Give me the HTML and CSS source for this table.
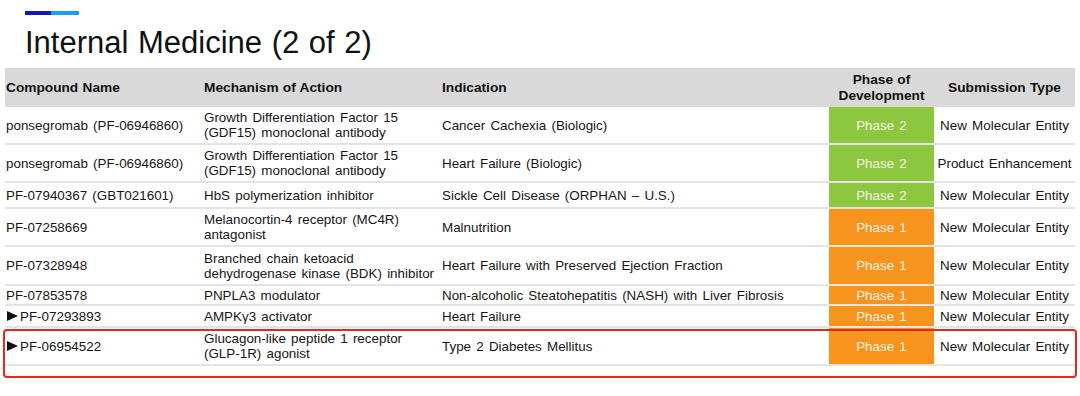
FILE: index.html
```html
<!DOCTYPE html>
<html>
<head>
<meta charset="utf-8">
<link rel="stylesheet" href="styles.css">
</head>
<body>
<div class="page">
  <div class="accent"><span class="a1"></span><span class="a2"></span></div>
  <h1 class="title">Internal Medicine (2 of 2)</h1>
  <div class="table">
    <div class="row head">
      <div class="cell c1">Compound Name</div>
      <div class="cell">Mechanism of Action</div>
      <div class="cell">Indication</div>
      <div class="cell center">Phase of<br>Development</div>
      <div class="cell center">Submission Type</div>
    </div>
    <div class="row r38">
      <div class="cell c1">ponsegromab (PF-06946860)</div>
      <div class="cell">Growth Differentiation Factor 15<br>(GDF15) monoclonal antibody</div>
      <div class="cell">Cancer Cachexia (Biologic)</div>
      <div class="cell center p2">Phase 2</div>
      <div class="cell center">New Molecular Entity</div>
    </div>
    <div class="row r38">
      <div class="cell c1">ponsegromab (PF-06946860)</div>
      <div class="cell">Growth Differentiation Factor 15<br>(GDF15) monoclonal antibody</div>
      <div class="cell">Heart Failure (Biologic)</div>
      <div class="cell center p2">Phase 2</div>
      <div class="cell center">Product Enhancement</div>
    </div>
    <div class="row r26">
      <div class="cell c1">PF-07940367 (GBT021601)</div>
      <div class="cell">HbS polymerization inhibitor</div>
      <div class="cell">Sickle Cell Disease (ORPHAN – U.S.)</div>
      <div class="cell center p2">Phase 2</div>
      <div class="cell center">New Molecular Entity</div>
    </div>
    <div class="row r38">
      <div class="cell c1">PF-07258669</div>
      <div class="cell">Melanocortin-4 receptor (MC4R)<br>antagonist</div>
      <div class="cell">Malnutrition</div>
      <div class="cell center p1">Phase 1</div>
      <div class="cell center">New Molecular Entity</div>
    </div>
    <div class="row r39">
      <div class="cell c1">PF-07328948</div>
      <div class="cell">Branched chain ketoacid<br>dehydrogenase kinase (BDK) inhibitor</div>
      <div class="cell">Heart Failure with Preserved Ejection Fraction</div>
      <div class="cell center p1">Phase 1</div>
      <div class="cell center">New Molecular Entity</div>
    </div>
    <div class="row r20">
      <div class="cell c1">PF-07853578</div>
      <div class="cell">PNPLA3 modulator</div>
      <div class="cell">Non-alcoholic Steatohepatitis (NASH) with Liver Fibrosis</div>
      <div class="cell center p1">Phase 1</div>
      <div class="cell center">New Molecular Entity</div>
    </div>
    <div class="row r22">
      <div class="cell c1"><span class="tri"></span>PF-07293893</div>
      <div class="cell">AMPKγ3 activator</div>
      <div class="cell">Heart Failure</div>
      <div class="cell center p1">Phase 1</div>
      <div class="cell center">New Molecular Entity</div>
    </div>
    <div class="row r38">
      <div class="cell c1"><span class="tri"></span>PF-06954522</div>
      <div class="cell">Glucagon-like peptide 1 receptor<br>(GLP-1R) agonist</div>
      <div class="cell">Type 2 Diabetes Mellitus</div>
      <div class="cell center p1">Phase 1</div>
      <div class="cell center">New Molecular Entity</div>
    </div>
    <div class="highlight"></div>
  </div>
</div>
</body>
</html>
```

FILE: styles.css
```css
html, body {
  margin: 0;
  padding: 0;
  background: #ffffff;
}

body {
  font-family: "Liberation Sans", Arial, sans-serif;
  color: #161616;
}

.page {
  width: 1080px;
  height: 396px;
  overflow: hidden;
}

.accent {
  display: flex;
  margin: 11px 0 0 25px;
  height: 4px;
}

.a1 {
  width: 26px;
  background: #1212c2;
}

.a2 {
  width: 28px;
  background: #1a9ef2;
}

.title {
  margin: 10px 0 0 25px;
  font-size: 31px;
  line-height: 36px;
  font-weight: normal;
  word-spacing: 1px;
  color: #111111;
}

.table {
  position: relative;
  margin: 7px 0 0 5px;
  width: 1070px;
  font-size: 13.4px;
  word-spacing: 1.5px;
}

.row {
  display: grid;
  grid-template-columns: 197px 238px 389px 105px 141px;
  box-sizing: border-box;
  border-bottom: 2px solid #e4e4e4;
}

.row.head {
  height: 39px;
  border-bottom: none;
  background: #d9d9d9;
  font-weight: bold;
  font-size: 13.7px;
  word-spacing: 0.5px;
  color: #111111;
}

.row.head .cell {
  line-height: 16px;
}

.r38 { height: 38px; }
.r39 { height: 39px; }
.r26 { height: 26px; }
.r20 { height: 20px; }
.r22 { height: 22px; }

.cell {
  display: flex;
  align-items: center;
  padding: 0 2px;
  line-height: 15px;
  white-space: nowrap;
}

.cell.c1 {
  padding-left: 1px;
}

.cell.center {
  justify-content: center;
  text-align: center;
  padding: 0;
}

.p2 {
  background: #8dc63f;
  color: #f4f9ea;
}

.p1 {
  background: #f7941d;
  color: #fdf3e4;
}

.tri {
  display: inline-block;
  width: 0;
  height: 0;
  margin: 0 2px 0 1px;
  border-left: 11px solid #111111;
  border-top: 5px solid transparent;
  border-bottom: 5px solid transparent;
}

.highlight {
  position: absolute;
  left: -2px;
  top: 261px;
  width: 1074px;
  height: 49px;
  box-sizing: border-box;
  border: 2px solid #e8261f;
  border-radius: 4px;
}
```
